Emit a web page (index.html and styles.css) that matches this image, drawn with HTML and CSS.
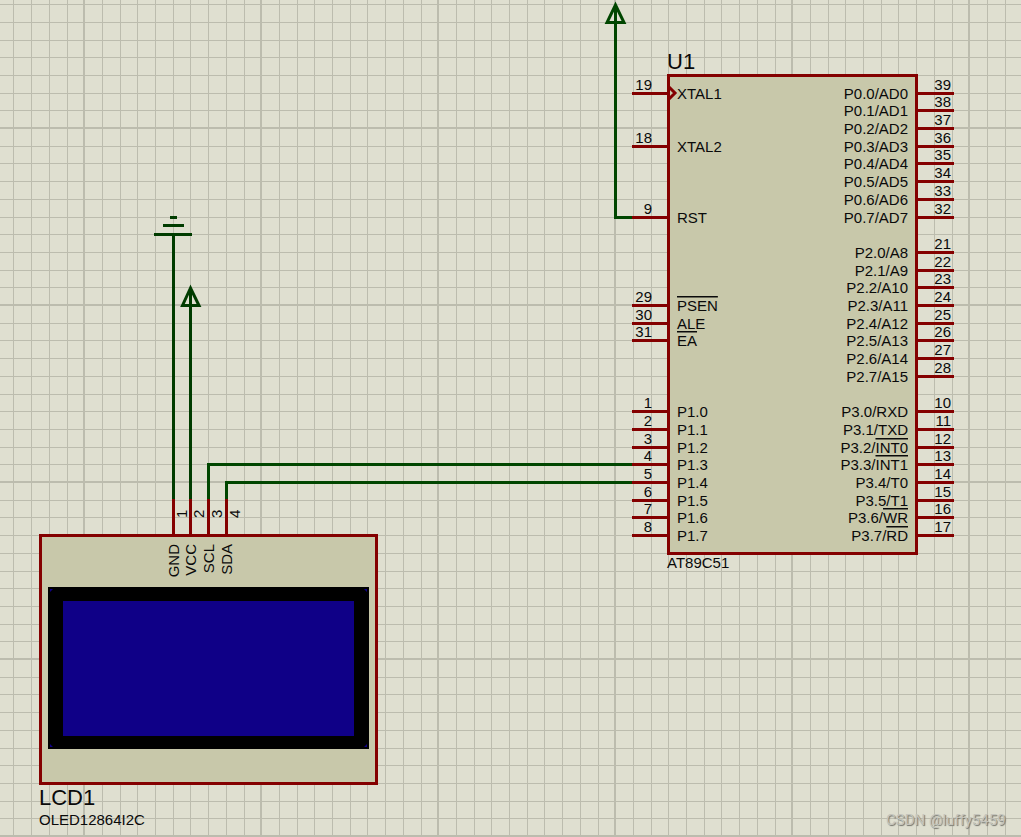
FILE: index.html
```
<!DOCTYPE html>
<html lang="en">
<head>
    <meta charset="UTF-8">
    <meta name="viewport" content="width=device-width, initial-scale=1.0">
    <title>AT89C51 with OLED12864I2C</title>
    <link rel="stylesheet" href="styles.css">
</head>
<body>
    <main class="sheet">
        <svg class="schematic" viewBox="0 0 1021 837" role="img" aria-label="AT89C51 wired to an I2C OLED display">
            <defs>
                <pattern id="grid" x="83" y="127" width="177" height="177" patternUnits="userSpaceOnUse">
                    <g id="grid-lines" class="grid-line"></g>
                </pattern>
            </defs>
            <rect width="1021" height="837" fill="url(#grid)"/>

            <!-- reset wire up to the power arrow -->
            <g class="wire">
                <rect x="614" y="8" width="3" height="211"/>
                <rect x="614" y="216" width="18" height="3"/>
                <path class="arrow" d="M615.5 5L607 22.5H624Z"/>
            </g>

            <!-- ground -->
            <g class="power">
                <rect x="170" y="216" width="7" height="3"/>
                <rect x="163" y="224" width="21" height="3"/>
                <rect x="154" y="233" width="38" height="3"/>
                <rect x="172" y="233" width="3" height="266"/>
            </g>

            <!-- VCC -->
            <g class="power">
                <rect x="189" y="290" width="3" height="209"/>
                <path class="arrow" d="M190.5 288L182.5 305.5H199Z"/>
            </g>

            <!-- SCL and SDA -->
            <g class="wire">
                <rect x="207" y="463" width="3" height="36"/>
                <rect x="207" y="463" width="425" height="3"/>
                <rect x="225" y="481" width="3" height="18"/>
                <rect x="225" y="481" width="407" height="3"/>
            </g>

            <!-- display -->
            <rect class="border" x="39" y="534" width="339" height="251"/>
            <rect class="body" x="42" y="537" width="333" height="245"/>
            <rect class="bezel" x="48" y="587" width="321" height="162"/>
            <rect class="screen" x="63" y="601" width="291" height="135"/>
            <path class="screen" d="M364 589H367V592ZM367 744V747H364ZM50 744V747H53ZM50 592V589H53Z"/>
            <g id="lcd-pins"></g>
            <text class="ref" x="39" y="805">LCD1</text>
            <text class="label" x="39" y="825">OLED12864I2C</text>

            <!-- controller -->
            <rect class="border" x="667" y="74" width="251" height="481"/>
            <rect class="body" x="670" y="77" width="245" height="475"/>
            <path class="clock" d="M669 87L675 93L669 99"/>
            <g id="mcu-pins"></g>
            <text class="ref" x="667" y="69">U1</text>
            <text class="label" x="667" y="568">AT89C51</text>

            <text class="watermark" x="886" y="825">CSDN @luffy5459</text>
        </svg>
    </main>

    <script src="script.js"></script>
</body>
</html>
```
FILE: styles.css
```
body {
    margin: 0;
    background: #dfdfd0;
    font-family: "Liberation Sans", Arial, sans-serif;
}
.sheet {
    overflow: hidden;
}
.schematic {
    display: block;
    width: 100%;
    height: auto;
}
.grid-line {
    fill: #bcbcae;
}
.wire {
    fill: #004600;
    stroke: #004600;
    stroke-width: 0;
}
.power {
    fill: #003c00;
    stroke: #003c00;
    stroke-width: 0;
}
.arrow {
    fill: none;
    stroke-width: 3px;
}
.border, .pin {
    fill: #840000;
}
.body {
    fill: #c8c8aa;
}
.bezel {
    fill: #000000;
}
.screen {
    fill: #0f0087;
}
.clock {
    fill: none;
    stroke: #840000;
    stroke-width: 3px;
}
.label {
    font-size: 15px;
    fill: #0a0a0a;
}
.ref {
    font-size: 22px;
    fill: #0a0a0a;
}
.end {
    text-anchor: end;
}
.bar {
    text-decoration: overline;
    text-decoration-thickness: 2px;
}
.watermark {
    font-family: Roboto, "Liberation Sans", sans-serif;
    font-size: 15px;
    fill: #c4c4bc;
    text-shadow: 1px 1px 1px #707068;
}
```
FILE: script.js
```
// a name after "~" is drawn with a bar over it
const leftPins = [
    [19, "XTAL1", 93], [18, "XTAL2", 146], [9, "RST", 217],
    [29, "~PSEN", 305], [30, "ALE", 323], [31, "~EA", 340],
    [1, "P1.0", 411], [2, "P1.1", 429], [3, "P1.2", 447], [4, "P1.3", 464],
    [5, "P1.4", 482], [6, "P1.5", 500], [7, "P1.6", 517], [8, "P1.7", 535]
];

const rightPins = [
    [39, "P0.0/AD0", 93], [38, "P0.1/AD1", 110], [37, "P0.2/AD2", 128], [36, "P0.3/AD3", 146],
    [35, "P0.4/AD4", 163], [34, "P0.5/AD5", 181], [33, "P0.6/AD6", 199], [32, "P0.7/AD7", 217],
    [21, "P2.0/A8", 252], [22, "P2.1/A9", 270], [23, "P2.2/A10", 287], [24, "P2.3/A11", 305],
    [25, "P2.4/A12", 323], [26, "P2.5/A13", 340], [27, "P2.6/A14", 358], [28, "P2.7/A15", 376],
    [10, "P3.0/RXD", 411], [11, "P3.1/TXD", 429], [12, "P3.2/~INT0", 447], [13, "P3.3/~INT1", 464],
    [14, "P3.4/T0", 482], [15, "P3.5/T1", 500], [16, "P3.6/~WR", 517], [17, "P3.7/~RD", 535]
];

const lcdPins = [[1, "GND", 173], [2, "VCC", 190], [3, "SCL", 208], [4, "SDA", 226]];

function pinName(name) {
    const [plain, barred] = name.split("~");
    return barred ? `${plain}<tspan class="bar">${barred}</tspan>` : plain;
}

function drawGrid() {
    const columns = [19, 37, 54, 72, 90, 107, 125, 143, 161];
    const rows = [19, 36, 54, 72, 90, 107, 125, 143, 160];
    let lines = '<rect width="2" height="177"/><rect width="177" height="2"/>';
    columns.forEach(x => lines += `<rect x="${x}" width="1" height="177"/>`);
    rows.forEach(y => lines += `<rect y="${y}" width="177" height="1"/>`);
    document.getElementById("grid-lines").innerHTML = lines;
}

function drawMcuPins() {
    let pins = "";
    leftPins.forEach(([number, name, y]) => {
        pins += `
            <rect class="pin" x="632" y="${y - 1}" width="35" height="3"/>
            <text class="label end" x="652" y="${y - 3}">${number}</text>
            <text class="label" x="677" y="${y + 6}">${pinName(name)}</text>`;
    });
    rightPins.forEach(([number, name, y]) => {
        pins += `
            <rect class="pin" x="918" y="${y - 1}" width="36" height="3"/>
            <text class="label end" x="951" y="${y - 3}">${number}</text>
            <text class="label end" x="908" y="${y + 6}">${pinName(name)}</text>`;
    });
    document.getElementById("mcu-pins").innerHTML = pins;
}

function drawLcdPins() {
    let pins = "";
    lcdPins.forEach(([number, name, x]) => {
        pins += `
            <rect class="pin" x="${x - 1}" y="499" width="3" height="35"/>
            <text class="label" transform="translate(${x + 14} 518) rotate(-90)">${number}</text>
            <text class="label end" transform="translate(${x + 6} 544) rotate(-90)">${name}</text>`;
    });
    document.getElementById("lcd-pins").innerHTML = pins;
}

drawGrid();
drawMcuPins();
drawLcdPins();
```
